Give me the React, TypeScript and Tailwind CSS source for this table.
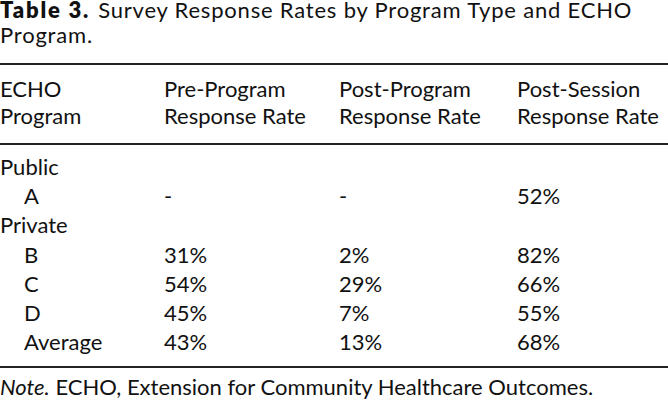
const rows: { label: string; sub?: boolean; pre?: string; post?: string; session?: string }[] = [
  { label: 'Public' },
  { label: 'A', sub: true, pre: '-', post: '-', session: '52%' },
  { label: 'Private' },
  { label: 'B', sub: true, pre: '31%', post: '2%', session: '82%' },
  { label: 'C', sub: true, pre: '54%', post: '29%', session: '66%' },
  { label: 'D', sub: true, pre: '45%', post: '7%', session: '55%' },
  { label: 'Average', sub: true, pre: '43%', post: '13%', session: '68%' },
];

export default function App() {
  return (
    <div
      className="w-[668px] h-[402px] overflow-hidden bg-white text-[#111] text-[22px]"
      style={{ fontFamily: 'Lato, "Open Sans", sans-serif' }}
    >
      <div className="-mt-[3px] leading-[25px] tracking-[0.8px]">
        <span className="font-extrabold tracking-[1.8px]">Table 3.</span>
        <span className="ml-[8px]">Survey Response Rates by Program Type and ECHO Program.</span>
      </div>

      <div className="mt-[16px] border-t-2 border-[#222]" />

      <div className="grid grid-cols-[164px_175px_178px_1fr] pt-[10px] pb-[14px] leading-[27px]">
        <div>ECHO<br />Program</div>
        <div>Pre-Program<br />Response Rate</div>
        <div>Post-Program<br />Response Rate</div>
        <div className="whitespace-nowrap">Post-Session<br />Response Rate</div>
      </div>

      <div className="border-t-2 border-[#222]" />

      <div className="pt-[7px]">
        {rows.map((r) => (
          <div key={r.label} className="grid grid-cols-[164px_175px_178px_1fr] h-[29.2px] leading-[29.2px]">
            <div className={r.sub ? 'pl-[24px]' : ''}>{r.label}</div>
            <div>{r.pre}</div>
            <div>{r.post}</div>
            <div>{r.session}</div>
          </div>
        ))}
      </div>

      <div className="mt-[10px] border-t-2 border-[#222]" />

      <div className="mt-[6px] leading-[25px]">
        <span className="italic">Note.</span> ECHO, Extension for Community Healthcare Outcomes.
      </div>
    </div>
  );
}
